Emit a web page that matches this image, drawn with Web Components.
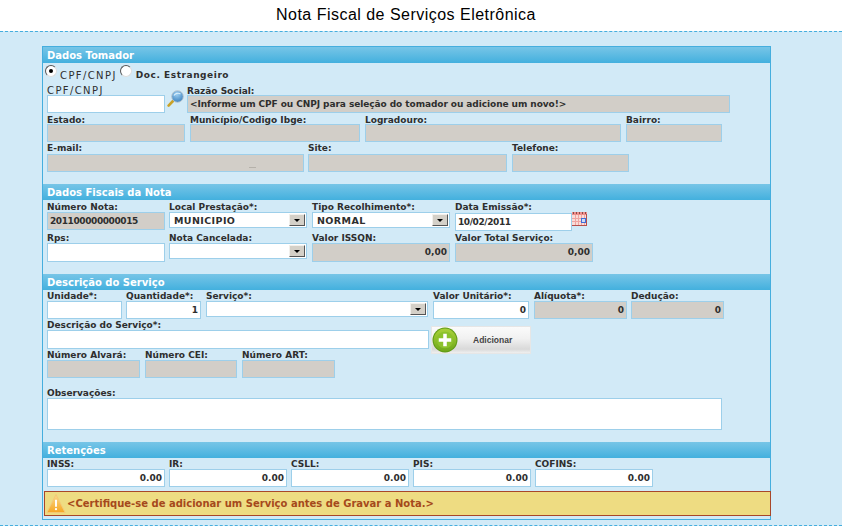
<!DOCTYPE html>
<html lang="pt">
<head>
<meta charset="utf-8">
<title>Nota Fiscal de Serviços Eletrônica</title>
<style>
html, body { margin: 0; padding: 0; background: #fff; overflow: hidden; }
body { font: bold 9px "DejaVu Sans", sans-serif; color: #2e2e2e; }
</style>
</head>
<body>
<nf-page heading="Nota Fiscal de Serviços Eletrônica">
  <nf-section heading="Dados Tomador">
    <nf-radios></nf-radios>
    <nf-row style="--label-lh:14px">
      <nf-field label="CPF/CNPJ" plain w="118"></nf-field>
      <nf-search></nf-search>
      <nf-field label="Razão Social:" off w="543" value="&lt;Informe um CPF ou CNPJ para seleção do tomador ou adicione um novo!&gt;" tighter></nf-field>
    </nf-row>
    <nf-row gap="5" style="--label-lh:14px">
      <nf-field label="Estado:" off w="138"></nf-field>
      <nf-field label="Município/Codigo Ibge:" off w="170"></nf-field>
      <nf-field label="Logradouro:" off w="256"></nf-field>
      <nf-field label="Bairro:" off w="96"></nf-field>
    </nf-row>
    <nf-row gap="4" top="1" style="--label-lh:10px">
      <nf-field label="E-mail:" off w="257"><i style="display:block;width:7px;height:1px;background:#b5b1aa;margin:12px 0 0 199px"></i></nf-field>
      <nf-field label="Site:" off w="199"></nf-field>
      <nf-field label="Telefone:" off w="117" style="margin-left:1px"></nf-field>
    </nf-row>
  </nf-section>

  <nf-section heading="Dados Fiscais da Nota" top="12">
    <nf-row gap="4" top="1">
      <nf-field label="Número Nota:" off w="118" value="201100000000015" tight></nf-field>
      <nf-select label="Local Prestação*:" w="138" value="MUNICIPIO"></nf-select>
      <nf-select label="Tipo Recolhimento*:" w="138" value="NORMAL" style="margin-left:1px"></nf-select>
      <nf-field label="Data Emissão*:" w="117" value="10/02/2011" boxtop="1" tight style="margin-left:1px"></nf-field>
      <nf-calendar></nf-calendar>
    </nf-row>
    <nf-row gap="4" top="1">
      <nf-field label="Rps:" w="118" h="19"></nf-field>
      <nf-select label="Nota Cancelada:" w="138"></nf-select>
      <nf-field label="Valor ISSQN:" off w="138" h="19" value="0,00" right style="margin-left:1px"></nf-field>
      <nf-field label="Valor Total Serviço:" off w="138" h="19" value="0,00" right style="margin-left:1px"></nf-field>
    </nf-row>
  </nf-section>

  <nf-section heading="Descrição do Serviço" top="12">
    <nf-row gap="4">
      <nf-field label="Unidade*:" w="75"></nf-field>
      <nf-field label="Quantidade*:" w="75" value="1" right></nf-field>
      <nf-select label="Serviço*:" w="222" style="margin-left:1px"></nf-select>
      <nf-field label="Valor Unitário*:" w="96" value="0" right style="margin-left:1px"></nf-field>
      <nf-field label="Alíquota*:" off w="93" value="0" right style="margin-left:1px"></nf-field>
      <nf-field label="Dedução:" off w="93" value="0" right></nf-field>
    </nf-row>
    <nf-row gap="2">
      <nf-field label="Descrição do Serviço*:" w="382" h="19"></nf-field>
      <nf-add-button>Adicionar</nf-add-button>
    </nf-row>
    <nf-row gap="5" top="-5">
      <nf-field label="Número Alvará:" off w="93"></nf-field>
      <nf-field label="Número CEI:" off w="92"></nf-field>
      <nf-field label="Número ART:" off w="93"></nf-field>
    </nf-row>
    <nf-row top="9">
      <nf-field label="Observações:" w="675" h="32"></nf-field>
    </nf-row>
  </nf-section>

  <nf-section heading="Retenções" top="12">
    <nf-row gap="4">
      <nf-field label="INSS:" w="118" value="0.00" right></nf-field>
      <nf-field label="IR:" w="118" value="0.00" right></nf-field>
      <nf-field label="CSLL:" w="118" value="0.00" right></nf-field>
      <nf-field label="PIS:" w="118" value="0.00" right></nf-field>
      <nf-field label="COFINS:" w="118" value="0.00" right></nf-field>
    </nf-row>
    <nf-alert>&lt;Certifique-se de adicionar um Serviço antes de Gravar a Nota.&gt;</nf-alert>
  </nf-section>
</nf-page>

<script>
// moldura da pagina: titulo, faixa azul e painel
class NfPage extends HTMLElement {
    constructor() {
        super();
        this.attachShadow({ mode: 'open' });
        this.shadowRoot.innerHTML = `
            <style>
                :host { display: block; }
                h1 {
                    margin: 0;
                    height: 31px;
                    box-sizing: border-box;
                    padding: 6px 30px 0 0;
                    text-align: center;
                    font: normal 16px/18px "Liberation Sans", sans-serif;
                    letter-spacing: .48px;
                    color: #000;
                }
                .band {
                    height: 495px;
                    box-sizing: border-box;
                    padding: 14px 71px 0 42px;
                    background: #d2eaf7;
                    border-top: 1px dashed #45aede;
                    border-bottom: 1px dashed #45aede;
                }
                .panel {
                    height: 474px;
                    box-sizing: border-box;
                    border: 1px solid #45aede;
                }
            </style>
            <h1>${this.getAttribute('heading')}</h1>
            <div class="band"><div class="panel"><slot></slot></div></div>
        `;
    }
}

class NfSection extends HTMLElement {
    constructor() {
        super();
        this.attachShadow({ mode: 'open' });
        const top = this.getAttribute('top') || 0;
        this.shadowRoot.innerHTML = `
            <style>
                :host { display: block; margin-top: ${top}px; }
                .bar {
                    height: 16px;
                    padding-left: 4px;
                    background: linear-gradient(#77c5e7, #43b0de);
                    color: #fff;
                    font: bold 10px/18px "DejaVu Sans", sans-serif;
                }
                .body { padding-left: 4px; }
            </style>
            <div class="bar">${this.getAttribute('heading')}</div>
            <div class="body"><slot></slot></div>
        `;
    }
}

class NfRow extends HTMLElement {
    constructor() {
        super();
        this.attachShadow({ mode: 'open' });
        const gap = this.getAttribute('gap') || 0;
        const top = this.getAttribute('top') || 0;
        this.shadowRoot.innerHTML = `
            <style>
                :host { display: flex; align-items: flex-start; gap: ${gap}px; margin-top: ${top}px; }
            </style>
            <slot></slot>
        `;
    }
}

class NfField extends HTMLElement {
    constructor() {
        super();
        this.attachShadow({ mode: 'open' });
        const w = this.getAttribute('w');
        const h = this.getAttribute('h') || 18;
        const off = this.hasAttribute('off');
        const right = this.hasAttribute('right');
        const plain = this.hasAttribute('plain');
        let spacing = '0';
        if (this.hasAttribute('tight')) spacing = '-.4px';
        if (this.hasAttribute('tighter')) spacing = '-.07px';
        this.shadowRoot.innerHTML = `
            <style>
                :host { display: block; width: ${w}px; }
                .label {
                    height: 11px;
                    line-height: var(--label-lh, 12px);
                    white-space: nowrap;
                    font-weight: ${plain ? 'normal' : 'bold'};
                    font-size: ${plain ? '10px' : '9px'};
                    letter-spacing: ${plain ? '1.4px' : '0'};
                }
                .box {
                    box-sizing: border-box;
                    height: ${h}px;
                    margin-top: ${this.getAttribute('boxtop') || 0}px;
                    padding: 0 2px;
                    border: 1px solid #9dcfea;
                    background: ${off ? '#d2cec8' : '#fff'};
                    text-align: ${right ? 'right' : 'left'};
                    line-height: 16px;
                    letter-spacing: ${spacing};
                    white-space: nowrap;
                    overflow: hidden;
                }
            </style>
            <div class="label">${this.getAttribute('label')}</div>
            <div class="box">${(this.getAttribute('value') || '').replace(/</g, '&lt;')}<slot></slot></div>
        `;
    }
}

class NfSelect extends HTMLElement {
    constructor() {
        super();
        this.attachShadow({ mode: 'open' });
        this.shadowRoot.innerHTML = `
            <style>
                :host { display: block; width: ${this.getAttribute('w')}px; }
                .label { height: 11px; line-height: var(--label-lh, 12px); white-space: nowrap; }
                .box {
                    display: flex;
                    align-items: center;
                    justify-content: space-between;
                    box-sizing: border-box;
                    height: 16px;
                    padding: 0 1px 0 4px;
                    border: 1px solid #9dcfea;
                    background: #fff;
                    letter-spacing: .4px;
                    font-size: 9.5px;
                }
                .arrow {
                    display: flex;
                    align-items: center;
                    justify-content: center;
                    box-sizing: border-box;
                    width: 16px;
                    height: 12px;
                    background: #d4d0c8;
                    border: 1px solid;
                    border-color: #f2f0ec #555 #555 #f2f0ec;
                }
                .arrow::after {
                    content: "";
                    border: 3px solid transparent;
                    border-top: 3px solid #000;
                    border-bottom: 0;
                }
            </style>
            <div class="label">${this.getAttribute('label')}</div>
            <div class="box"><span>${this.getAttribute('value') || ''}</span><span class="arrow"></span></div>
        `;
    }
}

class NfRadios extends HTMLElement {
    constructor() {
        super();
        this.attachShadow({ mode: 'open' });
        this.shadowRoot.innerHTML = `
            <style>
                :host { display: flex; height: 21px; margin-left: -2px; font-weight: normal; }
                .r {
                    box-sizing: border-box;
                    width: 12px;
                    height: 12px;
                    margin-top: 2px;
                    border-radius: 50%;
                    background: #fff;
                    border: 1px solid #555;
                    border-right-color: #ddd;
                    border-bottom-color: #ddd;
                    display: flex;
                    align-items: center;
                    justify-content: center;
                }
                .r.on::after { content: ""; width: 4px; height: 4px; border-radius: 50%; background: #000; }
                span { margin: 7px 3px 0 3px; line-height: 11px; font-size: 10px; letter-spacing: 1.4px; white-space: nowrap; }
                .doc { font-weight: bold; font-size: 9px; letter-spacing: .55px; margin-left: 4px; }
            </style>
            <div class="r on"></div><span>CPF/CNPJ</span>
            <div class="r"></div><span class="doc">Doc. Estrangeiro</span>
        `;
    }
}

class NfSearch extends HTMLElement {
    constructor() {
        super();
        this.attachShadow({ mode: 'open' });
        this.shadowRoot.innerHTML = `
            <style>
                :host { display: block; width: 22px; height: 29px; padding: 6px 0 0 2px; box-sizing: border-box; }
                svg { display: block; }
            </style>
            <svg width="18" height="18" viewBox="0 0 18 18">
                <defs><radialGradient id="g" cx=".45" cy=".3" r=".8"><stop offset="0" stop-color="#9fd0f2"/><stop offset="1" stop-color="#2f78b8"/></radialGradient></defs>
                <path d="M6 11 1.6 15.6" stroke="#c9a227" stroke-width="2.6" stroke-linecap="round"/>
                <circle cx="10.5" cy="6.5" r="5.8" fill="url(#g)" stroke="#b9c6cf" stroke-width="1"/>
                <path d="M7 5.5c1-2 4-3 6.5-1.6" stroke="#d8eefb" stroke-width="1.2" fill="none"/>
            </svg>
        `;
    }
}

class NfCalendar extends HTMLElement {
    constructor() {
        super();
        this.attachShadow({ mode: 'open' });
        this.shadowRoot.innerHTML = `
            <style>
                :host { display: block; margin: 11px 0 0 -4px; }
                svg { display: block; }
            </style>
            <svg width="15" height="14" viewBox="0 0 15 14" shape-rendering="crispEdges">
                <rect width="15" height="14" fill="#f9dcd8"/>
                <rect width="15" height="3" fill="#ee8f8b"/>
                <path d="M1 0v2M4 0v2M7 0v2M10 0v2M13 0v2" stroke="#8a4a48"/>
                <path d="M3 3v11M6 3v11M9 3v11M12 3v11M0 6h15M0 9h15" stroke="#f0a5a1"/>
                <rect x="9" y="6" width="4" height="4" fill="#cfd9f6" stroke="#3f6fd8"/>
                <path d="M14.5 2v12M0 13.5h15" stroke="#b4504c"/>
            </svg>
        `;
    }
}

class NfAddButton extends HTMLElement {
    constructor() {
        super();
        this.attachShadow({ mode: 'open' });
        this.shadowRoot.innerHTML = `
            <style>
                :host {
                    display: flex;
                    align-items: center;
                    box-sizing: border-box;
                    width: 100px;
                    height: 28px;
                    margin-top: 7px;
                    border: 1px solid #e6e6e6;
                    background: linear-gradient(#fbfbfb, #f1f1f1 45%, #d9d9d9 85%, #efefef);
                    font: bold 8.5px "Liberation Sans", sans-serif;
                    color: #444;
                }
                svg { flex: none; }
                span { margin-left: 15px; }
            </style>
            <svg width="26" height="26" viewBox="0 0 25 25">
                <defs><linearGradient id="b" x1="0" y1="0" x2="0" y2="1"><stop offset="0" stop-color="#a9d13a"/><stop offset="1" stop-color="#6fa81a"/></linearGradient></defs>
                <circle cx="12.5" cy="12.5" r="12" fill="#5f9a14"/>
                <circle cx="12.5" cy="12.5" r="11" fill="url(#b)"/>
                <circle cx="12.5" cy="12.5" r="8" fill="#8cc22c"/>
                <path d="M12.5 6.5v12M6.5 12.5h12" stroke="#fff" stroke-width="3.4"/>
            </svg>
            <span><slot></slot></span>
        `;
    }
}

class NfAlert extends HTMLElement {
    constructor() {
        super();
        this.attachShadow({ mode: 'open' });
        this.shadowRoot.innerHTML = `
            <style>
                :host {
                    display: flex;
                    align-items: center;
                    box-sizing: border-box;
                    height: 25px;
                    margin: 4px 0 0 -3px;
                    width: 727px;
                    border: 1px solid #a8472a;
                    background: #eedc82;
                    color: #a5491c;
                    font-size: 10px;
                    white-space: nowrap;
                }
                svg { flex: none; margin: 0 1px 0 1px; }
            </style>
            <svg width="20" height="21" viewBox="0 0 21 21">
                <defs><linearGradient id="w" x1="0" y1="0" x2="0" y2="1"><stop offset="0" stop-color="#fbd98a"/><stop offset="1" stop-color="#f5a623"/></linearGradient></defs>
                <path d="M10.5 1 20 20H1z" fill="url(#w)" stroke="#f3c877" stroke-linejoin="round"/>
                <path d="M10.5 6.5v7.5" stroke="#fff" stroke-width="2"/>
                <circle cx="10.5" cy="16.5" r="1.2" fill="#fff"/>
            </svg>
            <span><slot></slot></span>
        `;
    }
}

customElements.define('nf-page', NfPage);
customElements.define('nf-section', NfSection);
customElements.define('nf-row', NfRow);
customElements.define('nf-field', NfField);
customElements.define('nf-select', NfSelect);
customElements.define('nf-radios', NfRadios);
customElements.define('nf-search', NfSearch);
customElements.define('nf-calendar', NfCalendar);
customElements.define('nf-add-button', NfAddButton);
customElements.define('nf-alert', NfAlert);
</script>
</body>
</html>
